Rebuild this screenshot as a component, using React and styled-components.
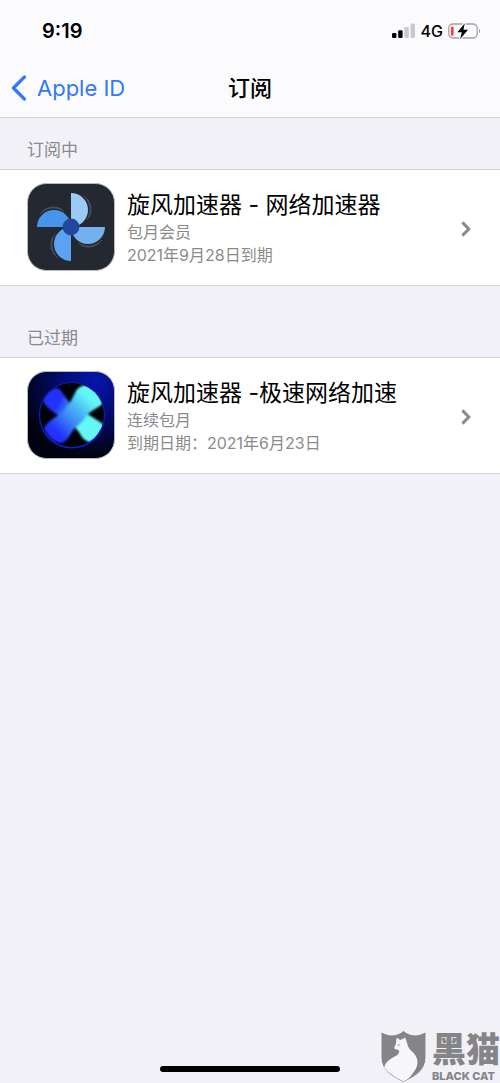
import React from "react";
import styled, { createGlobalStyle } from "styled-components";

const subscriptions = [
  {
    label: "订阅中",
    items: [
      {
        name: "旋风加速器 - 网络加速器",
        plan: "包月会员",
        date: "2021年9月28日到期",
        Icon: PinwheelIcon,
      },
    ],
  },
  {
    label: "已过期",
    items: [
      {
        name: "旋风加速器 -极速网络加速",
        plan: "连续包月",
        date: "到期日期：2021年6月23日",
        Icon: NeonFanIcon,
      },
    ],
  },
];

function App() {
  return (
    <>
      <GlobalStyle />
      <Screen>
        <Header>
          <StatusBar>
            <Time>9:19</Time>
            <StatusIcons>
              <SignalIcon />
              <Network>4G</Network>
              <BatteryIcon />
            </StatusIcons>
          </StatusBar>
          <NavBar>
            <BackLink href="#apple-id">
              <BackIcon />
              <span>Apple ID</span>
            </BackLink>
            <NavTitle>订阅</NavTitle>
          </NavBar>
        </Header>
        <main>
          {subscriptions.map((group) => (
            <Section key={group.label}>
              <SectionLabel>{group.label}</SectionLabel>
              {group.items.map((item) => (
                <Row key={item.name} type="button">
                  <item.Icon />
                  <Info>
                    <Name>{item.name}</Name>
                    <Detail>{item.plan}</Detail>
                    <Detail>{item.date}</Detail>
                  </Info>
                  <Chevron viewBox="0 0 10 16">
                    <path d="M1.4 1.4 7.8 8l-6.4 6.6" />
                  </Chevron>
                </Row>
              ))}
            </Section>
          ))}
        </main>
        <Footer>
          <HomeIndicator />
        </Footer>
        <Watermark>
          <CatShield />
          <Brand>
            <BrandName>黑猫</BrandName>
            <BrandLatin>BLACK CAT</BrandLatin>
          </Brand>
        </Watermark>
      </Screen>
    </>
  );
}

export default App;

function SignalIcon() {
  return (
    <svg width="24" height="16" viewBox="0 0 24 16">
      <rect x="0" y="10" width="4.4" height="5" rx="1.2" fill="#000" />
      <rect x="6.2" y="7.3" width="4.4" height="7.7" rx="1.2" fill="#000" />
      <rect x="12.4" y="4" width="4.4" height="11" rx="1.2" fill="#cacacc" />
      <rect x="18.6" y="0.5" width="4.4" height="14.5" rx="1.2" fill="#cacacc" />
    </svg>
  );
}

function BatteryIcon() {
  return (
    <svg width="33" height="18" viewBox="0 0 33 18">
      <rect x="0.8" y="2" width="28.4" height="14" rx="4.2" fill="none" stroke="#a3a3a5" strokeWidth="1.3" />
      <path d="M31 6.8c1.5.5 1.5 3.9 0 4.4z" fill="#a3a3a5" />
      <rect x="3" y="4.4" width="2.6" height="9.4" rx="1" fill="#fa3e35" />
      <path
        d="M16.8 1.2 9.4 10.2h4.4l-1.6 6.8 7.8-9.2h-4.6z"
        fill="#000"
        stroke="#fbfbfc"
        strokeWidth="2.4"
        paintOrder="stroke"
        strokeLinejoin="round"
      />
    </svg>
  );
}

function BackIcon() {
  return (
    <svg width="16" height="26" viewBox="0 0 16 26">
      <path d="M13.4 2 2.4 13l11 11" fill="none" stroke="#3478f6" strokeWidth="3.2" strokeLinecap="round" strokeLinejoin="round" />
    </svg>
  );
}

function PinwheelIcon() {
  return (
    <AppIcon viewBox="0 0 88 88">
      <rect x="0.5" y="0.5" width="87" height="87" rx="19" fill="#232831" stroke="#b9babd" />
      <g fill="none" stroke="#566470" strokeWidth="0.7">
        <path id="swirl" d="M57 13c7 6 8 16 3 24M60 16c5 6 5 13 2 18" />
        <use href="#swirl" transform="rotate(90 44 44)" />
        <use href="#swirl" transform="rotate(180 44 44)" />
        <use href="#swirl" transform="rotate(270 44 44)" />
      </g>
      <path d="M44 10a17 17 0 0 1 0 34z" fill="#9bcaf5" />
      <path d="M78 44a17 17 0 0 1-34 0z" fill="#72b0f0" />
      <path d="M44 78a17 17 0 0 1 0-34z" fill="#5ba2f2" />
      <path d="M10 44a17 17 0 0 1 34 0z" fill="#4795ea" />
      <circle cx="44" cy="44" r="8.4" fill="#22479c" />
    </AppIcon>
  );
}

function NeonFanIcon() {
  return (
    <AppIcon viewBox="0 0 88 88">
      <defs>
        <radialGradient id="night" cx="0.78" cy="0.1" r="0.9">
          <stop offset="0" stopColor="#0615ae" />
          <stop offset="0.5" stopColor="#030a66" />
          <stop offset="1" stopColor="#01020f" />
        </radialGradient>
        <linearGradient id="beam" x1="30" y1="34" x2="61" y2="51" gradientUnits="userSpaceOnUse">
          <stop offset="0" stopColor="#2230fa" />
          <stop offset="0.3" stopColor="#3a80f4" />
          <stop offset="0.6" stopColor="#46b4f4" />
          <stop offset="0.85" stopColor="#62f8f6" />
        </linearGradient>
        <linearGradient id="sweep" x1="28" y1="60" x2="64" y2="22" gradientUnits="userSpaceOnUse">
          <stop offset="0" stopColor="#2230fa" />
          <stop offset="0.4" stopColor="#3f92f5" />
          <stop offset="0.65" stopColor="#4cc0f5" />
          <stop offset="0.9" stopColor="#62f8f6" />
        </linearGradient>
        <filter id="soft" x="-20%" y="-20%" width="140%" height="140%">
          <feGaussianBlur stdDeviation="1.2" />
        </filter>
        <clipPath id="disc">
          <circle cx="45" cy="44" r="32" />
        </clipPath>
      </defs>
      <rect x="0.5" y="0.5" width="87" height="87" rx="19" fill="url(#night)" stroke="#b9babd" />
      <circle cx="45" cy="44" r="32.5" fill="#000209" stroke="#101fae" strokeWidth="1.2" />
      <g clipPath="url(#disc)" filter="url(#soft)">
        <path
          fill="url(#beam)"
          d="M16 29c2-6 7-11 13-12 4 0 6 4 8 7l8 11 14 7c6 4 13 8 18 12 0 8-6 15-14 17-6-1-9-6-11-10l-8-9-12-7c-5-4-14-8-16-16z"
        />
        <path
          fill="url(#sweep)"
          d="M49 20c4-6 11-7 17-5 6 3 11 9 11 16-4 5-10 7-16 12-3 4-7 10-14 15-4 5-6 12-12 14-8 0-15-7-18-15 3-6 9-9 16-14 6-4 9-9 16-23z"
        />
      </g>
      <path d="M16 59a32.500 32.500 0 0 0 58 0" fill="none" stroke="#0b22cf" strokeWidth="1.4" />
    </AppIcon>
  );
}

function CatShield() {
  return (
    <svg width="47" height="54" viewBox="0 0 47 54">
      <path
        d="M1 2.500c8 5 16 4.500 22.500-1 6.500 5.500 14.500 6 22.500 1v26c0 12-9 18.500-22.500 25C10 47 1 40.500 1 28.500z"
        fill="#858487"
        stroke="#f8f8fa"
        strokeWidth="1"
      />
      <path
        d="M17.200 8.500c1 1.200 1.600 2 3 2.200 1.800.1 3.200-1 4.800-2.200.8 1.500 1.300 3 2 5 .6 2.500.9 4.300 2.500 6.300 1.800 2.400 4 3.700 5.500 6 2 3 2.800 6 2.400 9-.6 5.500-4.500 9-6.900 12.700-2 2-4 3.500-6.800 5-8-4-15-8-19.400-14 1-5 4-7 7-9 4-2.500 7.300-3.500 7.800-6.500.2-1.500-.8-2.200-2.300-2.500-1.500-.2-2.900-.8-2.400-2.600.4-1.500 1.500-2.200 1.700-4 .2-2.500-.2-3.400 1.100-5.400z"
        fill="#f7f7fb"
      />
      <path d="M17.500 16.500l2.500-.8" stroke="#858487" strokeWidth="0.800" />
    </svg>
  );
}

const GlobalStyle = createGlobalStyle`
  * {
    box-sizing: border-box;
  }
  body {
    margin: 0;
    background: #f2f1f7;
    font-family: Inter, "Noto Sans CJK SC", sans-serif;
    color: #000;
  }
  svg {
    display: block;
    flex-shrink: 0;
  }
`;

const Screen = styled.div`
  position: relative;
  display: flex;
  flex-direction: column;
  min-height: 100vh;
  overflow: hidden;
`;

const Header = styled.header`
  background: #fbfbfd;
  border-bottom: 1px solid #d5d4da;
`;

const StatusBar = styled.div`
  display: flex;
  align-items: center;
  justify-content: space-between;
  height: 61px;
  padding: 0 19px 0 42px;
`;

const Time = styled.span`
  font-size: 20px;
  font-weight: 600;
`;

const StatusIcons = styled.div`
  display: flex;
  align-items: center;
  gap: 5px;
`;

const Network = styled.span`
  font-size: 16px;
  font-weight: 500;
`;

const NavBar = styled.nav`
  display: grid;
  grid-template-columns: 1fr auto 1fr;
  align-items: center;
  height: 56px;
  padding: 0 11px 2px;
`;

const BackLink = styled.a`
  display: flex;
  align-items: center;
  gap: 10px;
  color: #3478f6;
  font-size: 22px;
  text-decoration: none;
`;

const NavTitle = styled.h1`
  margin: 0;
  font-size: 22px;
  font-weight: 500;
  line-height: 32px;
`;

const Section = styled.section`
  & + & {
    padding-top: 20px;
  }
`;

const SectionLabel = styled.h2`
  margin: 0;
  padding: 20px 27px 7px;
  color: #8a8a8e;
  font-size: 17px;
  font-weight: 400;
  line-height: 24px;
`;

const Row = styled.button`
  display: flex;
  align-items: center;
  gap: 12px;
  width: 100%;
  height: 117px;
  padding: 0 29px 1px 27px;
  border: solid #d5d4da;
  border-width: 1px 0;
  background: #fff;
  color: inherit;
  font-family: inherit;
  text-align: left;
  cursor: pointer;
`;

const AppIcon = styled.svg`
  width: 88px;
  height: 88px;
`;

const Info = styled.span`
  display: flex;
  flex: 1;
  flex-direction: column;
  min-width: 0;
  padding-top: 2px;
`;

const Name = styled.span`
  font-size: 23px;
  line-height: 32px;
`;

const Detail = styled.span`
  color: #8a8a8e;
  font-size: 16px;
  line-height: 23px;
`;

const Chevron = styled.svg`
  width: 10px;
  height: 16px;
  margin-top: 4px;
  fill: none;
  stroke: #8b8b8e;
  stroke-width: 3px;
`;

const Footer = styled.footer`
  display: flex;
  justify-content: center;
  margin-top: auto;
  padding: 24px 0 11px;
`;

const HomeIndicator = styled.div`
  width: 36%;
  height: 6px;
  border-radius: 3px;
  background: #000;
`;

const Watermark = styled.div`
  position: absolute;
  right: 0;
  bottom: 0;
  display: flex;
  align-items: flex-end;
  gap: 5px;
  color: #858487;
`;

const Brand = styled.div`
  display: flex;
  flex-direction: column;
`;

const BrandName = styled.span`
  font-size: 34px;
  font-weight: 900;
  line-height: 38px;
`;

const BrandLatin = styled.span`
  font-size: 11px;
  font-weight: 800;
  line-height: 14px;
`;
